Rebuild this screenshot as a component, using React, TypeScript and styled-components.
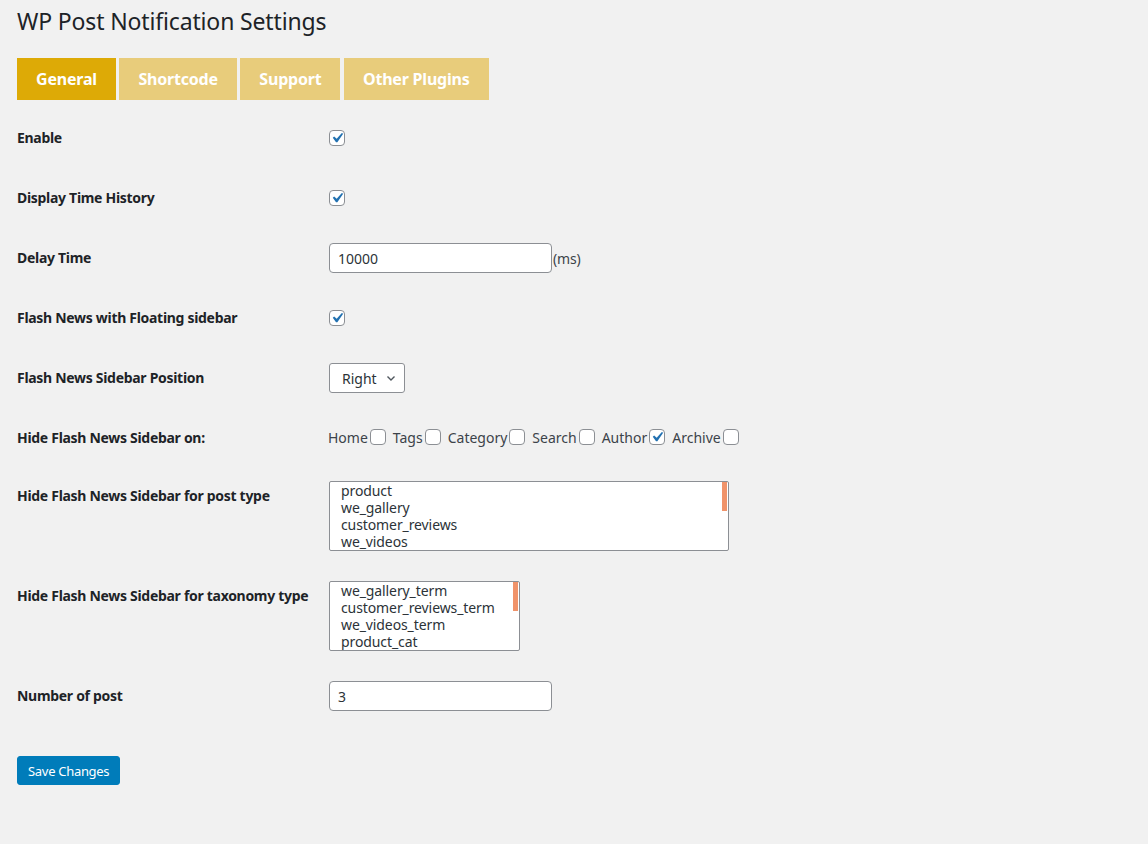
import React from 'react';
import styled, { createGlobalStyle } from 'styled-components';

const GlobalStyle = createGlobalStyle`
  html, body {
    margin: 0;
    padding: 0;
    background: #f1f1f1;
  }
  body {
    font-family: "Noto Sans", "Open Sans", sans-serif;
    font-size: 14px;
    color: #1d2327;
  }
`;

const Wrap = styled.div`
  padding: 0 17px 40px;
  min-height: 804px;
`;

const Title = styled.h1`
  margin: 0;
  padding: 6px 0 0;
  font-size: 23px;
  font-weight: 400;
  letter-spacing: -0.15px;
  line-height: 30px;
  color: #1d2327;
`;

const Tabs = styled.nav`
  display: flex;
  gap: 3.5px;
  margin-top: 22px;
  margin-bottom: 8px;
`;

const Tab = styled.a<{ $active?: boolean }>`
  display: flex;
  align-items: center;
  height: 42px;
  padding: 0 19px;
  background: ${(p) => (p.$active ? '#ddaa06' : '#e8cc7b')};
  color: #fff;
  font-weight: 700;
  font-size: 16px;
  letter-spacing: -0.2px;
  text-decoration: none;
  cursor: pointer;
`;

const Row = styled.div`
  display: flex;
`;

const Label = styled.div`
  width: 312px;
  flex-shrink: 0;
  padding: 21px 0 19px;
  line-height: 18px;
  font-weight: 700;
  font-size: 14px;
  letter-spacing: -0.3px;
`;

const Field = styled.div<{ $top?: boolean; $h?: number }>`
  display: flex;
  align-items: ${(p) => (p.$top ? 'flex-start' : 'center')};
  padding: 15px 0;
  min-height: ${(p) => p.$h ?? 30}px;
`;

const Box = styled.span`
  display: inline-flex;
  align-items: center;
  justify-content: center;
  box-sizing: border-box;
  width: 16px;
  height: 16px;
  border: 1px solid #8c8f94;
  border-radius: 4px;
  background: #fff;
  flex-shrink: 0;
  overflow: visible;

  svg {
    margin: -3px;
    flex-shrink: 0;
  }
`;

const Check = ({ checked }: { checked?: boolean }) => (
  <Box>
    {checked && (
      <svg width="20" height="20" viewBox="0 0 20 20">
        <path d="M14.83 4.89l1.34.94-5.81 8.38H9.02L5.78 9.67l1.34-1.25 2.57 2.4z" fill="#2271b1" />
      </svg>
    )}
  </Box>
);

const TextInput = styled.input`
  box-sizing: border-box;
  width: 223px;
  height: 30px;
  padding: 0 8px;
  border: 1px solid #8c8f94;
  border-radius: 4px;
  background: #fff;
  font-family: inherit;
  font-size: 14px;
  color: #2c3338;
  outline: none;
`;

const Unit = styled.span`
  margin-left: 1px;
  color: #3c434a;
  letter-spacing: -0.2px;
`;

const Select = styled.div`
  display: inline-flex;
  align-items: center;
  gap: 8px;
  box-sizing: border-box;
  height: 30px;
  padding: 0 7px 0 12px;
  border: 1px solid #8c8f94;
  border-radius: 3px;
  background: #fff;
  color: #2c3338;
`;

const CheckGroup = styled.div`
  display: flex;
  align-items: center;
  gap: 7px;
  margin-left: -1px;
`;

const CheckItem = styled.label`
  display: inline-flex;
  align-items: center;
  gap: 2px;
  color: #3c434a;
`;

const ListBox = styled.div<{ $w: number }>`
  position: relative;
  box-sizing: border-box;
  width: ${(p) => p.$w}px;
  height: 70px;
  padding: 0 12px 0 11px;
  border: 1px solid #8c8f94;
  border-radius: 2px;
  background: #fff;
  overflow: hidden;
  color: #2c3338;
`;

const Option = styled.div`
  line-height: 17px;
  white-space: nowrap;
  letter-spacing: -0.1px;
`;

const Thumb = styled.span`
  position: absolute;
  top: 0;
  right: 1px;
  width: 5px;
  height: 29px;
  background: #f0936a;
`;

const SaveButton = styled.button`
  margin-top: 30px;
  height: 29px;
  padding: 0 10px;
  border: 1px solid #007cba;
  border-radius: 3px;
  background: #007cba;
  color: #fff;
  font-family: inherit;
  font-size: 13px;
  letter-spacing: -0.3px;
  cursor: pointer;
`;

const Chevron = () => (
  <svg width="12" height="12" viewBox="0 0 12 12">
    <path d="M2.5 4.5L6 8l3.5-3.5" fill="none" stroke="#50575e" strokeWidth="1.4" />
  </svg>
);

const postTypes = ['product', 'we_gallery', 'customer_reviews', 'we_videos'];
const taxonomies = ['we_gallery_term', 'customer_reviews_term', 'we_videos_term', 'product_cat'];
const pages = [
  { name: 'Home', on: false },
  { name: 'Tags', on: false },
  { name: 'Category', on: false },
  { name: 'Search', on: false },
  { name: 'Author', on: true },
  { name: 'Archive', on: false },
];

const App: React.FC = () => {
  return (
    <Wrap>
      <GlobalStyle />
      <Title>WP Post Notification Settings</Title>
      <Tabs>
        <Tab $active>General</Tab>
        <Tab>Shortcode</Tab>
        <Tab>Support</Tab>
        <Tab>Other Plugins</Tab>
      </Tabs>

      <Row>
        <Label>Enable</Label>
        <Field><Check checked /></Field>
      </Row>
      <Row>
        <Label>Display Time History</Label>
        <Field><Check checked /></Field>
      </Row>
      <Row>
        <Label>Delay Time</Label>
        <Field>
          <TextInput defaultValue="10000" />
          <Unit>(ms)</Unit>
        </Field>
      </Row>
      <Row>
        <Label>Flash News with Floating sidebar</Label>
        <Field><Check checked /></Field>
      </Row>
      <Row>
        <Label>Flash News Sidebar Position</Label>
        <Field>
          <Select>Right <Chevron /></Select>
        </Field>
      </Row>
      <Row>
        <Label>Hide Flash News Sidebar on:</Label>
        <Field $h={28}>
          <CheckGroup>
            {pages.map((p) => (
              <CheckItem key={p.name}>
                {p.name}
                <Check checked={p.on} />
              </CheckItem>
            ))}
          </CheckGroup>
        </Field>
      </Row>
      <Row>
        <Label>Hide Flash News Sidebar for post type</Label>
        <Field $top $h={70}>
          <ListBox $w={400}>
            {postTypes.map((t) => <Option key={t}>{t}</Option>)}
            <Thumb />
          </ListBox>
        </Field>
      </Row>
      <Row>
        <Label>Hide Flash News Sidebar for taxonomy type</Label>
        <Field $top $h={70}>
          <ListBox $w={191}>
            {taxonomies.map((t) => <Option key={t}>{t}</Option>)}
            <Thumb />
          </ListBox>
        </Field>
      </Row>
      <Row>
        <Label>Number of post</Label>
        <Field>
          <TextInput defaultValue="3" />
        </Field>
      </Row>
      <SaveButton>Save Changes</SaveButton>
    </Wrap>
  );
};

export default App;
